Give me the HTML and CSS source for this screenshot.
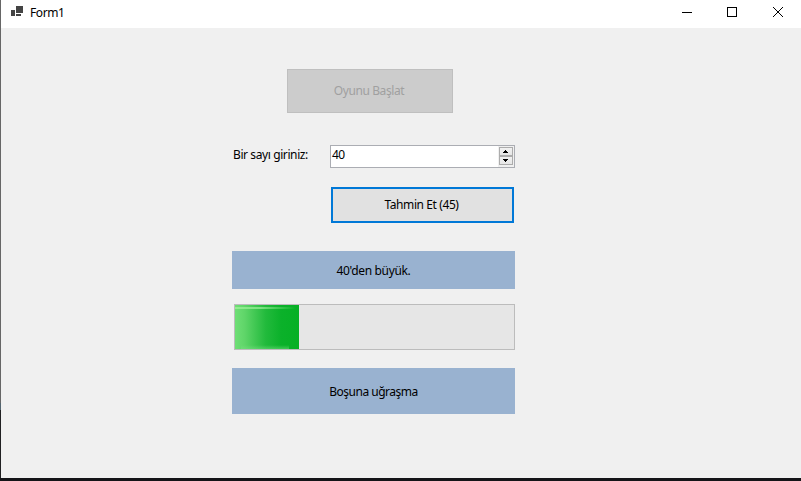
FILE: index.html
```html
<!DOCTYPE html>
<html lang="tr">
<head>
<meta charset="utf-8">
<title>Form1</title>
<link rel="stylesheet" href="styles.css">
</head>
<body>
<div class="window">
  <header class="titlebar">
    <svg class="app-icon" width="14" height="12" viewBox="0 0 14 12" shape-rendering="crispEdges" fill="#444">
      <path d="M5 0h7v7H5zM0 4h4v6H0zM5 8h5v2H5z"/>
    </svg>
    <span class="title">Form1</span>
    <div class="controls">
      <svg width="46" height="28" stroke="#000" fill="none"><path d="M18 12.5h10" shape-rendering="crispEdges"/></svg>
      <svg width="46" height="28" stroke="#000" fill="none"><rect x="17.5" y="7.5" width="9" height="9" shape-rendering="crispEdges"/></svg>
      <svg width="46" height="28" stroke="#000" fill="none"><path d="M17 7l10 10M27 7L17 17"/></svg>
    </div>
  </header>
  <main class="form">
    <button class="start" disabled><span class="t-start">Oyunu Başlat</span></button>
    <div class="entry">
      <label class="caption">Bir sayı giriniz:</label>
      <div class="numeric">
        <span class="value">40</span>
        <div class="spinner">
          <span class="step"><svg width="6" height="3" shape-rendering="crispEdges"><path d="M2 0h1v1h1v1h1v1H0V2h1V1h1z"/></svg></span>
          <span class="step"><svg width="6" height="3" shape-rendering="crispEdges"><path d="M0 0h5v1H4v1H3v1H2V2H1V1H0z"/></svg></span>
        </div>
      </div>
    </div>
    <button class="guess"><span class="t-guess">Tahmin Et (45)</span></button>
    <div class="banner hint"><span class="t-hint">40'den büyük.</span></div>
    <div class="progress"><div class="bar"></div></div>
    <div class="banner status"><span class="t-status">Boşuna uğraşma</span></div>
  </main>
</div>
</body>
</html>
```
FILE: styles.css
```css
* { box-sizing: border-box; }
body {
  margin: 0;
  height: 481px;
  overflow: hidden;
  background: #141418;
  font: 12px/16px "Noto Sans", "Open Sans", sans-serif;
  letter-spacing: -0.4px;
  color: #000;
}
button { font: inherit; letter-spacing: inherit; color: inherit; padding: 0; border-radius: 0; }
svg { display: block; }
span { white-space: nowrap; }
.window {
  height: 478px;
  padding-left: 1px;
  background: linear-gradient(#666 0 403px, #52646f 403px 410px, #202022 410px);
}
.titlebar { display: flex; height: 28px; background: #fff; }
.app-icon { margin: 6px 0 0 10px; }
.title { margin: 5px 0 0 5px; }
.controls { display: flex; margin-left: auto; margin-right: -1px; }
.form {
  display: flex;
  flex-direction: column;
  height: 450px;
  padding: 41px 286px 0 231px;
  background: #f0f0f0;
}
.start {
  width: 166px;
  height: 44px;
  margin-left: 55px;
  border: 1px solid #bfbfbf;
  background: #ccc;
  color: #a0a0a0;
}
.t-start { position: relative; left: -1px; }
.entry { display: flex; justify-content: space-between; margin-top: 32px; }
.caption { padding: 2px 0 0 1px; white-space: nowrap; }
.numeric {
  display: flex;
  justify-content: space-between;
  width: 185px;
  height: 23px;
  border: 1px solid #abadb3;
  background: #fff;
}
.value { margin: 1px 0 0 1px; letter-spacing: -0.7px; }
.spinner { width: 16px; height: 21px; padding: 1px 1px 1px 1px; background: #f0f0f0; }
.step {
  display: flex;
  align-items: center;
  justify-content: center;
  width: 14px;
  height: 9px;
  border: 1px solid #acacac;
  background: linear-gradient(#f1f1f1, #e6e6e6);
}
.guess {
  width: 183px;
  height: 36px;
  margin: 19px 0 0 99px;
  border: 2px solid #0078d7;
  background: #e1e1e1;
}
.t-guess { position: relative; left: -1px; }
.banner {
  display: flex;
  align-items: center;
  justify-content: center;
  padding-top: 2px;
  background: #99b2d0;
}
.t-hint { letter-spacing: -0.35px; }
.t-status { letter-spacing: -0.5px; }
.hint { height: 38px; margin-top: 28px; }
.progress {
  height: 46px;
  margin: 15px 0 0 2px;
  border: 1px solid #bcbcbc;
  background: #e6e6e6;
}
.bar {
  width: 64px;
  height: 44px;
  background:
    linear-gradient(90deg, #94ee91, #7ee283 40%, #06b025 95%) 0 2px / 100% 2px no-repeat,
    linear-gradient(transparent, rgba(120, 225, 130, 0.5)) 6px 100% / 48px 4px no-repeat,
    linear-gradient(90deg, #6fdf76, #5fd569 15%, #22ba3c 48%, #0bb12a 72%, #06b025);
}
.status { height: 46px; margin-top: 18px; }
```
